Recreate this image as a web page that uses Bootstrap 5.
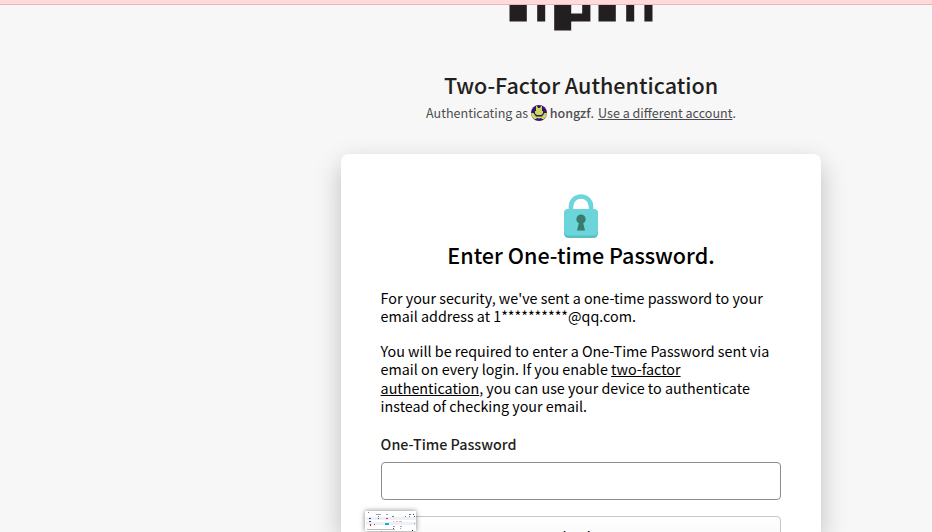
<!DOCTYPE html>
<html lang="en">
<head>
<meta charset="utf-8">
<meta name="viewport" content="width=device-width, initial-scale=1">
<title>Two-Factor Authentication</title>
<link href="https://cdn.jsdelivr.net/npm/bootstrap@5.3.0/dist/css/bootstrap.min.css" rel="stylesheet">
<style>
  body { height: 532px; background: #f7f7f7; color: #000; font-family: "Source Sans Pro", "Noto Sans CJK SC", sans-serif; font-size: 14.32px; line-height: 18.33px; }
  .notice-strip { height: 5px; background: #ffdadb; border-bottom: 1px solid #f2b3b6; }
  .page-main { width: 480px; height: 527px; margin-left: 341px; }
  .brand-logo { width: 144px; height: 27px; }
  .page-title { font-size: 21.55px; line-height: 30px; margin-top: 38px; color: #231f20; font-weight: 500; }
  .auth-line { font-size: 12.55px; line-height: 20px; margin-top: 3px; color: #4e4f52; white-space: nowrap; }
  .auth-line a { color: #4a4b50; }
  .avatar { width: 16px; height: 16px; margin: 0 3px 0 2.5px; }
  .otp-card { height: 378px; margin-top: 31px; padding: 40px 40px 0; border-radius: 8px 8px 0 0; box-shadow: 0 10px 27px rgba(0,0,0,.23); }
  .lock-icon { width: 34px; height: 44px; }
  .otp-title { font-size: 21.55px; line-height: 30px; margin: 2px 0 0; font-weight: 500; }
  .otp-copy { margin: 0 0 16.6px -.4px; white-space: nowrap; }
  .otp-lead { padding-top: 18.7px; }
  .otp-label { font-weight: 500; line-height: 20px; margin: 18.7px 0 0 -.4px; color: #231f20; }
  .otp-input { height: 38px; border: 1px solid #8c8c8c; border-radius: 4px; padding: 0 8px; }
  .otp-login { height: 40px; border: 1px solid #c6c6c6; border-radius: 4px; background: linear-gradient(#fff, #f5f5f5); font-size: 14.4px; line-height: 20px; padding: 8px 0; color: #000; }
  .drag-preview { left: 365px; top: 511px; width: 51px; height: 20px; box-shadow: 0 0 5px rgba(0,0,0,.5); }
</style>
<script src="https://cdn.jsdelivr.net/npm/bootstrap@5.3.0/dist/js/bootstrap.bundle.min.js"></script>
</head>
<body class="overflow-hidden position-relative">
  <div class="notice-strip"></div>
  <main class="page-main">
    <div class="d-flex justify-content-center">
      <svg class="brand-logo" viewBox="0 0 144 27" aria-label="npm" fill="#231f20"><path d="M.5 0h17.3v16.6H.5zM28.2 0h8v16.6h-8zM45.2 0h17v8.4h11V0h8.2v16.6H62.2v9H45.2zM89.5 0h17.3v16.6H89.5zM117.2 0h8v16.6h-8zM135.4 0h8.1v16.6h-8.1z"/></svg>
    </div>
    <h1 class="page-title text-center mb-0">Two-Factor Authentication</h1>
    <div class="auth-line d-flex justify-content-center align-items-center">
      <span class="auth-as">Authenticating as</span>
      <svg class="avatar" viewBox="0 0 16 16"><defs><clipPath id="round"><circle cx="8" cy="8" r="8"/></clipPath></defs><g clip-path="url(#round)"><path fill="#3b136f" d="M0 0h16v16H0z"/><path fill="#c7dc5a" d="M5 1h1l1 2h2l1-2h1v5h1v2.500L10 10H6L4 8.500V6h1zM0 8h2.500L5 11.500h6L13.500 8H16v3l-3 3h-2l-1-1H9l-1 1-1-1H6l-1 1H3l-3-3z"/></g></svg>
      <span class="auth-user fw-medium">hongzf</span><span>.</span><a class="auth-switch ms-1" href="#">Use a different account</a><span>.</span>
    </div>
    <section class="otp-card bg-white">
      <div class="d-flex justify-content-center">
        <svg class="lock-icon" viewBox="0 0 34 44"><path d="M7 19V12.500a10 10 0 0 1 20 0V19" fill="none" stroke="#6cd5da" stroke-width="4.600"/><rect y="15" width="34" height="29" rx="4.500" fill="#5abfc3"/><rect y="15" width="34" height="26.500" rx="4.500" fill="#6cd5da"/><path fill="#397b6c" d="M17 20.500a4.700 4.700 0 0 1 2.200 8.800L21 36.500h-8l1.800-7.200A4.700 4.700 0 0 1 17 20.500z"/></svg>
      </div>
      <h2 class="otp-title text-center mb-0">Enter One-time Password.</h2>
      <p class="otp-copy otp-lead">For your security, we've sent a one-time password to your<br>email address at 1**********@qq.com.</p>
      <p class="otp-copy">You will be required to enter a One-Time Password sent via<br>email on every login. If you enable <a class="text-black" href="#">two-factor</a><br><a class="text-black" href="#">authentication</a>, you can use your device to authenticate<br>instead of checking your email.</p>
      <label class="otp-label d-block" for="otp">One-Time Password</label>
      <input class="otp-input form-control mt-2" id="otp" type="text">
      <button class="otp-login btn w-100 mt-3" type="button">Login</button>
    </section>
  </main>
  <svg class="drag-preview position-absolute bg-white" viewBox="0 0 51 20" shape-rendering="crispEdges"><path fill="#edf0f6" d="M1 6h50v3H1zM1 11h50v3H1z"/><path fill="#777" d="M3 1h1v1H3zM13 5h1v1h-1zM27 5h2v1h-2zM40 5h1v1h-1zM44 3h2v1h-2zM44 5h1v1h-1z"/><path fill="#354a7a" d="M48 3h1v1h-1zM4 7h2v1H4zM13 7h1v1h-1zM4 10h2v1H4zM49 5h1v1h-1z"/><path fill="#e51c28" d="M21 7h2v1h-2zM5 13h1v2H5zM9 13h1v1H9zM28 17h1v1h-1z"/><path fill="#13aee5" d="M20 12h4v2h-4z"/><path fill="#aa94cc" d="M11 3h5v1h-5zM21 3h2v1h-2zM28 15h2v1h-2zM35 15h2v1h-2zM35 17h1v1h-1zM49 12h1v1h-1z"/><path fill="#f2b9a0" d="M28 10h1v1h-1zM31 10h2v1h-2zM34 10h3v1h-3z"/><path fill="#bbb" d="M2 18h28v1H2z"/><path fill="#222" d="M47 19h1v1h-1z"/></svg>
</body>
</html>
